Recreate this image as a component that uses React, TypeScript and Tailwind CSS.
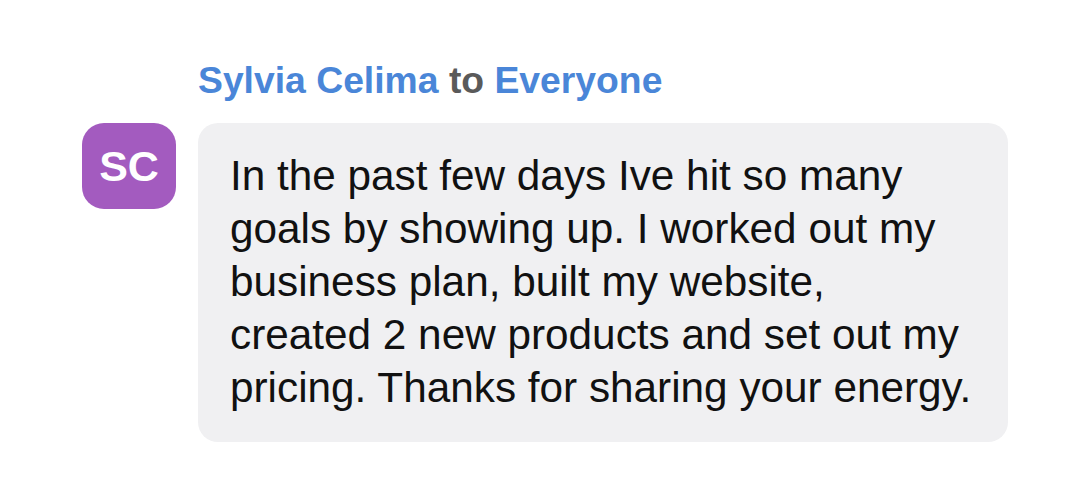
export default function App() {
  return (
    <div className="w-[1080px] h-[500px] bg-white font-['Liberation_Sans',Arial,sans-serif]">
      <div className="pl-[198px] pt-[58px]">
        <div className="text-[37.3px] font-bold leading-[44px]">
          <span className="text-[#4a86d8]">Sylvia Celima</span>{" "}
          <span className="text-[#5a5a5a]">to</span>{" "}
          <span className="text-[#4a86d8]">Everyone</span>
        </div>
      </div>
      <div className="flex items-start mt-[21px] pl-[82px]">
        <div className="w-[94px] h-[86px] rounded-[22px] bg-[#a35bbf] text-white flex items-center justify-center text-[43px] font-bold shrink-0">
          SC
        </div>
        <div className="ml-[22px] w-[810px] h-[319px] rounded-[20px] bg-[#f0f0f2] pl-[32px] pt-[26px]">
          <p className="text-[42.3px] leading-[53px] text-[#111]">
            In the past few days Ive hit so many
            <br />
            goals by showing up. I worked out my
            <br />
            business plan, built my website,
            <br />
            created 2 new products and set out my
            <br />
            pricing. Thanks for sharing your energy.
          </p>
        </div>
      </div>
    </div>
  );
}
